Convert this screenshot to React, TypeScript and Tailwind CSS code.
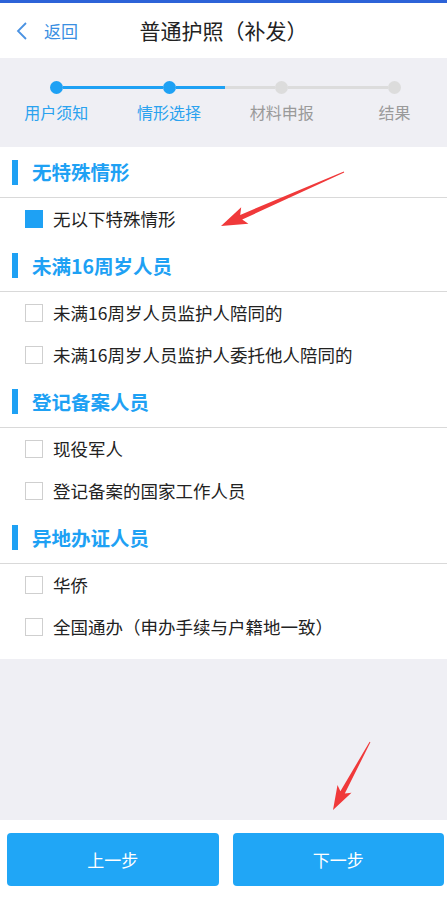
import React from "react";

const FONT = { fontFamily: '"Noto Sans CJK SC", "Noto Sans", sans-serif' };

type Item = { label: string; checked?: boolean };
type Section = { title: string; items: Item[] };

const sections: Section[] = [
  { title: "无特殊情形", items: [{ label: "无以下特殊情形", checked: true }] },
  {
    title: "未满16周岁人员",
    items: [{ label: "未满16周岁人员监护人陪同的" }, { label: "未满16周岁人员监护人委托他人陪同的" }],
  },
  { title: "登记备案人员", items: [{ label: "现役军人" }, { label: "登记备案的国家工作人员" }] },
  { title: "异地办证人员", items: [{ label: "华侨" }, { label: "全国通办（申办手续与户籍地一致）" }] },
];

const steps = [
  { label: "用户须知", active: true, left: "transparent", right: "blue" },
  { label: "情形选择", active: true, left: "blue", right: "blue" },
  { label: "材料申报", active: false, left: "gray", right: "gray" },
  { label: "结果", active: false, left: "gray", right: "transparent" },
];

function lineClass(c: string) {
  if (c === "blue") return "flex-1 h-[3px] bg-[#1ea1f4]";
  if (c === "gray") return "flex-1 h-[3px] bg-[#dcdcdc]";
  return "flex-1 h-[3px]";
}

export default function App() {
  return (
    <div className="relative flex h-[900px] w-[447px] flex-col overflow-hidden bg-[#efeff4]" style={FONT}>
      <div className="h-[3px] bg-[#2d63d8]" />
      {/* Header */}
      <div className="grid h-[55px] grid-cols-[1fr_auto_1fr] items-center bg-white">
        <div className="flex items-center">
          <svg width="12" height="20" viewBox="0 0 12 20" className="ml-[16px]">
            <polyline points="10,2 2,10 10,18" fill="none" stroke="#4a92e2" strokeWidth="1.8" />
          </svg>
          <span className="ml-[16px] text-[17px] text-[#3a8fe2]">返回</span>
        </div>
        <div className="text-[21px] text-[#222]">普通护照（补发）</div>
        <div />
      </div>
      {/* Stepper */}
      <div className="grid grid-cols-[repeat(4,112.7px)] bg-[#efeff4] pt-[23px] pb-[24px]">
        {steps.map((s) => (
          <div key={s.label} className="flex flex-col items-center">
            <div className="flex h-[13px] w-full items-center">
              <div className={lineClass(s.left)} />
              <div className={s.active ? "h-[13px] w-[13px] rounded-full bg-[#1ea1f4]" : "h-[13px] w-[13px] rounded-full bg-[#dcdcdc]"} />
              <div className={lineClass(s.right)} />
            </div>
            <div className={s.active ? "mt-[7px] text-[16px] leading-[22px] text-[#2aa2ef]" : "mt-[7px] text-[16px] leading-[22px] text-[#9a9a9a]"}>
              {s.label}
            </div>
          </div>
        ))}
      </div>
      {/* Content */}
      <div className="bg-white pb-[10px]">
        {sections.map((sec) => (
          <div key={sec.title}>
            <div className="flex h-[50px] items-center">
              <div className="ml-[12px] h-[25px] w-[6px] bg-[#1ea1f4]" />
              <div className="ml-[14px] text-[19.5px] font-bold text-[#1ea1f4]">{sec.title}</div>
            </div>
            <div className="h-px bg-[#d9d9d9]" />
            {sec.items.map((it) => (
              <div key={it.label} className="flex h-[42.5px] items-center pl-[25px]">
                {it.checked ? (
                  <div className="h-[18px] w-[18px] bg-[#1ea1f4]" />
                ) : (
                  <div className="h-[18px] w-[18px] border border-[#cfcfcf] bg-white" />
                )}
                <span className="ml-[10px] text-[17.5px] text-[#222]">{it.label}</span>
              </div>
            ))}
          </div>
        ))}
      </div>
      <div className="flex-1" />
      {/* Footer */}
      <div className="grid h-[80px] grid-cols-2 gap-[14px] bg-white pl-[7px] pr-[3px] pt-[13px] pb-[14px]">
        <button className="flex items-center justify-center rounded-[4px] bg-[#20a6f6] text-[17px] text-white">上一步</button>
        <button className="flex items-center justify-center rounded-[4px] bg-[#20a6f6] text-[17px] text-white">下一步</button>
      </div>
      {/* Annotation arrows */}
      <svg className="pointer-events-none absolute inset-0" width="447" height="900" viewBox="0 0 447 900">
        <polygon
          points="343.8,171.5 240.2,214.9 241.2,207.3 221,226 248.4,223.7 242.2,219.5 344.2,172.5"
          fill="#f0393a"
        />
        <polygon
          points="369.6,741.8 340.4,791.2 337.5,785.1 333,810 351.5,792.7 344.8,793.6 370.4,742.2"
          fill="#f0393a"
        />
      </svg>
    </div>
  );
}
